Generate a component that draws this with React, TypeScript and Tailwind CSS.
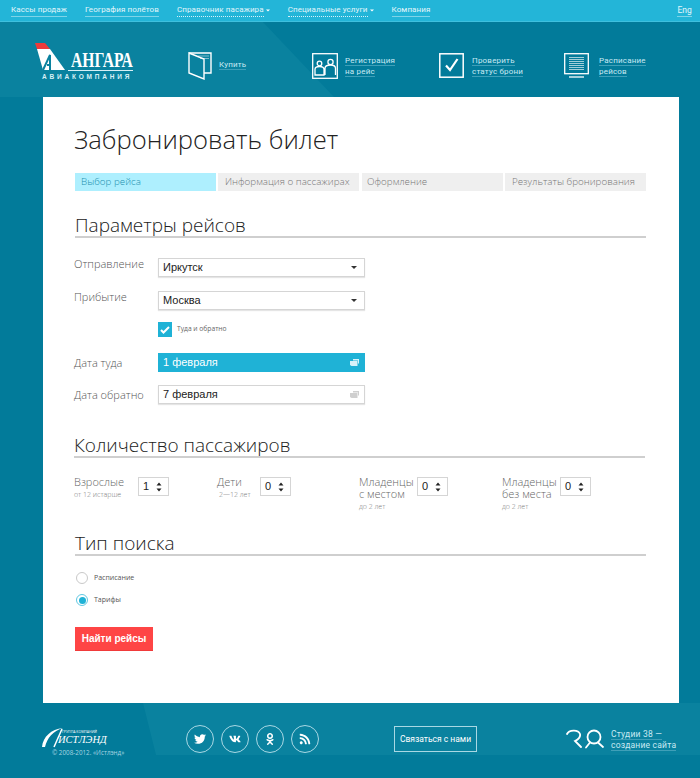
import { FaTwitter, FaVk, FaOdnoklassniki, FaRss } from "react-icons/fa";

const navItems = [
  { label: "Кассы продаж" },
  { label: "География полётов" },
  { label: "Справочник пасажира", drop: true },
  { label: "Специальные услуги", drop: true },
  { label: "Компания" },
];

const steps = [
  { label: "Выбор рейса", cls: "pl-[6px] bg-[#aeeffe] text-[#1d8fae]" },
  { label: "Информация о пассажирах", cls: "pl-[7px] bg-[#efefef] text-[#777]" },
  { label: "Оформление", cls: "ml-[1px] pl-[5px] bg-[#efefef] text-[#777]" },
  { label: "Результаты бронирования", cls: "pl-[7px] bg-[#efefef] text-[#777]" },
];

const BookIcon = () => (
  <svg width="24" height="28" viewBox="0 0 24 28" fill="none" stroke="white" strokeWidth="1.4">
    <path d="M1 1h22v20h-7" />
    <path d="M1 1l15 6v20L1 21z" />
    <path d="M10 4h11M12 6.500h9" strokeWidth="0.7" opacity="0.7" />
  </svg>
);

const PeopleIcon = () => (
  <svg width="26" height="26" viewBox="0 0 26 26" fill="none" stroke="white" strokeWidth="1.3">
    <rect x="0.7" y="0.7" width="24.6" height="24.6" />
    <circle cx="7.5" cy="10.5" r="2.3" />
    <circle cx="18.5" cy="9" r="2.6" />
    <path d="M3 22v-5.500c0-2 2-3 4.500-3s4.500 1 4.500 3V22zM13 22v-6.500c0-2.500 2.500-3.500 5.500-3.500s5 1 5 3.500V22" />
  </svg>
);

const CheckIcon = () => (
  <svg width="25" height="25" viewBox="0 0 25 25" fill="none" stroke="white">
    <rect x="0.8" y="0.8" width="23.4" height="23.4" strokeWidth="1.5" />
    <path d="M7 12.500l4 4.500 7.500-11" strokeWidth="2.200" />
  </svg>
);

const ScheduleIcon = () => (
  <svg width="25" height="25" viewBox="0 0 25 25" fill="none" stroke="white">
    <rect x="0.7" y="0.700" width="23.600" height="20" strokeWidth="1.300" />
    <path d="M5 4.500h15M5 6.500h15M5 8.500h15M5 10.500h15M5 12.500h15M5 14.500h15M5 16.500h15" strokeWidth="0.900" opacity="0.700" />
    <path d="M5 24h15" strokeWidth="1.300" />
  </svg>
);

const Caret = ({ className }: { className: string }) => (
  <svg width="6" height="3" viewBox="0 0 6 3" className={className}>
    <path d="M0 0h6L3 3z" fill="currentColor" />
  </svg>
);

const SpinArrows = () => (
  <svg width="6" height="10" viewBox="0 0 6 10" className="text-[#222]">
    <path d="M0.500 3.500L3 0.500 5.500 3.500zM0.500 6.500L3 9.500 5.500 6.500z" fill="currentColor" />
  </svg>
);

const CalendarIcon = ({ color }: { color: string }) => (
  <svg width="9" height="7" viewBox="0 0 9 7" fill={color}>
    <path d="M3 0h6v4.500H8V1.500H3zM0 2h7.500v5H1.500L0 6z" />
  </svg>
);

const SectionTitle = ({ children }: { children: string }) => (
  <div className="border-b-2 border-[#cfcfcf] w-[571px] h-[25px]">
    <h2 className="text-[19px] leading-[24px] font-light text-[#222] -mt-[4px]">{children}</h2>
  </div>
);

const Select = ({ value }: { value: string }) => (
  <div className="w-[207px] h-[19px] border border-[#d5d5d5] bg-white flex items-center justify-between pl-[4px] pr-[7px] shadow-[0_1px_1px_rgba(0,0,0,0.1)]">
    <span className="text-[11px] font-['Liberation_Sans',sans-serif] text-[#222]">{value}</span>
    <Caret className="text-[#333]" />
  </div>
);

const FormRow = ({ label, children, className, labelClass }: { label: string; children: React.ReactNode; className: string; labelClass: string }) => (
  <div className={`flex ${className}`}>
    <div className={`w-[84px] text-[11px] leading-[14px] text-[#555] font-light ${labelClass}`}>{label}</div>
    {children}
  </div>
);

const Stepper = ({ value }: { value: string }) => (
  <div className="h-[19px] w-[31px] border border-[#d5d5d5] flex items-center justify-between pl-[4px] pr-[6px]">
    <span className="text-[11px] font-['Liberation_Sans',sans-serif] text-[#222]">{value}</span>
    <SpinArrows />
  </div>
);

const Passenger = ({ label, sub, value, width, labelW, subPad }: { label: string; sub: string; value: string; width: string; labelW: string; subPad?: string }) => (
  <div className={`${width} flex items-start`}>
    <div className={`${labelW} font-light -mt-[1.5px]`}>
      <div className="text-[11px] leading-[12px] text-[#666]">{label}</div>
      <div className={`text-[7px] leading-[10px] mt-[2px] text-[#777] ${subPad ?? ""}`}>{sub}</div>
    </div>
    <Stepper value={value} />
  </div>
);

const HeaderLink = ({ lines, size }: { lines: string[]; size: string }) => (
  <div className={`${size} leading-[11px] text-[#c9eaf3] font-['Roboto',sans-serif] tracking-[0.2px]`}>
    {lines.map((l) => (
      <div key={l}><span className="border-b border-[#3f9fb8]">{l}</span></div>
    ))}
  </div>
);

const Social = ({ children }: { children: React.ReactNode }) => (
  <div className="w-[28px] h-[28px] rounded-full border border-[#a9d8e4] flex items-center justify-center text-white text-[12px]">
    {children}
  </div>
);

export default function App() {
  return (
    <div className="relative w-[700px] h-[778px] overflow-hidden bg-[#027b9a] font-['Open_Sans',sans-serif]">
      {/* background facets */}
      <svg className="absolute inset-0 pointer-events-none" width="700" height="778" viewBox="0 0 700 778">
        <path d="M0 21h262l72 76H0z" fill="#0a829f" />
        <path d="M143 703h557v52H156z" fill="#0a829f" />
      </svg>

      <div className="relative flex flex-col h-full">
        {/* top nav */}
        <div className="h-[22px] bg-[#23b5d8] border-b border-[#3fc0de] flex items-center gap-[18px] pl-[11px] pr-[8px] text-[8px] text-[#e2f6fb] font-['Roboto',sans-serif] tracking-[0.1px]">
          {navItems.map((n) => (
            <div key={n.label} className="flex items-center whitespace-nowrap">
              <span className={n.drop ? "border-b border-dotted border-[#d5f2fa]" : "border-b border-[#7ed4e8]"}>{n.label}</span>
              {n.drop && <Caret className="ml-[2px] w-[4px] text-white" />}
            </div>
          ))}
          <span className="ml-auto text-[8.500px] border-b border-[#7ed4e8]">Eng</span>
        </div>

        {/* header */}
        <div className="h-[75px] flex items-start">
          <div className="relative w-[98px] h-[40px] ml-[35px] mt-[20px]">
            <svg className="absolute left-0 top-0" width="32" height="30" viewBox="0 0 32 30">
              <path d="M0 1h10l5 6H2z" fill="#ee3b3b" />
              <path d="M2 7h13l15 21H8z" fill="white" />
              <path d="M8 28l7-15v15M12 23h3" fill="none" stroke="#0a829f" strokeWidth="2" />
            </svg>
            <span className="absolute left-[36px] top-[6.500px] text-[20px] leading-[22px] font-bold text-white font-['Liberation_Serif',serif] whitespace-nowrap origin-left scale-x-[0.78]">АНГАРА</span>
            <div className="absolute left-[33px] right-0 top-[28px] h-px bg-[#d8f0f6]" />
            <span className="absolute left-[7px] top-[30px] text-[6.500px] leading-[9px] font-bold text-[#d8f0f6] tracking-[2.800px] font-['Liberation_Sans',sans-serif] whitespace-nowrap">АВИАКОМПАНИЯ</span>
          </div>

          <div className="flex items-center mt-[30px] ml-[55px] w-[124px] gap-[7px]">
            <BookIcon />
            <div className="-mt-[4px]">
              <HeaderLink lines={["Купить"]} size="text-[8px]" />
            </div>
          </div>
          <div className="flex items-center mt-[31px] w-[127px] gap-[7px]">
            <PeopleIcon />
            <HeaderLink lines={["Регистрация", "на рейс"]} size="text-[8px]" />
          </div>
          <div className="flex items-center mt-[31px] w-[125px] gap-[8px]">
            <CheckIcon />
            <HeaderLink lines={["Проверить", "статус брони"]} size="text-[8px]" />
          </div>
          <div className="flex items-center mt-[31px] gap-[10px]">
            <ScheduleIcon />
            <HeaderLink lines={["Расписание", "рейсов"]} size="text-[8px]" />
          </div>
        </div>

        {/* card */}
        <div className="w-[636px] h-[606px] ml-[43px] bg-white pl-[31px] flex flex-col items-start">
          <h1 className="mt-[27px] text-[25.600px] leading-[32px] font-light text-[#222] whitespace-nowrap">Забронировать билет</h1>

          <div className="mt-[17px] flex ml-[1px] w-[571px] gap-[2px]">
            {steps.map((s) => (
              <div key={s.label} className={`w-[141px] shrink-0 h-[18px] flex items-center text-[9.800px] whitespace-nowrap font-light ${s.cls}`}>
                {s.label}
              </div>
            ))}
          </div>

          <div className="mt-[26px] ml-[1px]">
            <SectionTitle>Параметры рейсов</SectionTitle>
          </div>

          <FormRow label="Отправление" className="mt-[20px]" labelClass="-mt-[1px]">
            <Select value="Иркутск" />
          </FormRow>
          <FormRow label="Прибытие" className="mt-[14px]" labelClass="-mt-[1px]">
            <Select value="Москва" />
          </FormRow>
          <div className="mt-[12px] ml-[84px] flex items-center gap-[5px]">
            <div className="w-[14px] h-[15px] bg-[#1fb2d6] flex items-center justify-center">
              <svg width="10" height="8" viewBox="0 0 10 8" fill="none" stroke="white" strokeWidth="2">
                <path d="M1 4l2.500 2.500L9 1" />
              </svg>
            </div>
            <span className="text-[6.700px] text-[#666]">Туда и обратно</span>
          </div>
          <FormRow label="Дата туда" className="mt-[16px]" labelClass="mt-[3px]">
            <div className="w-[207px] h-[19px] bg-[#1fb2d6] flex items-center justify-between pl-[5px] pr-[6px]">
              <span className="text-[11px] text-white font-['Liberation_Sans',sans-serif]">1 февраля</span>
              <CalendarIcon color="#d8f2f9" />
            </div>
          </FormRow>
          <FormRow label="Дата обратно" className="mt-[13px]" labelClass="mt-[3px]">
            <div className="w-[207px] h-[19px] border border-[#d5d5d5] flex items-center justify-between pl-[4px] pr-[5px] shadow-[0_1px_1px_rgba(0,0,0,0.1)]">
              <span className="text-[11px] font-['Liberation_Sans',sans-serif] text-[#222]">7 февраля</span>
              <CalendarIcon color="#cfcfcf" />
            </div>
          </FormRow>

          <div className="mt-[33px]">
            <SectionTitle>Количество пассажиров</SectionTitle>
          </div>

          <div className="mt-[19px] flex h-[53px]">
            <Passenger label="Взрослые" sub="от 12 истарше" value="1" width="w-[143px]" labelW="w-[64px]" />
            <Passenger label="Дети" sub="2—12 лет" value="0" width="w-[142px]" labelW="w-[43px]" subPad="pl-[2px]" />
            <Passenger label="Младенцы с местом" sub="до 2 лет" value="0" width="w-[143px]" labelW="w-[58px]" />
            <Passenger label="Младенцы без места" sub="до 2 лет" value="0" width="w-[143px]" labelW="w-[58px]" />
          </div>

          <div className="mt-[5px] ml-[1px]">
            <SectionTitle>Тип поиска</SectionTitle>
          </div>

          <div className="mt-[16px] ml-[2px] flex items-center gap-[6px] h-[12px]">
            <div className="w-[12px] h-[12px] rounded-full border border-[#c9c9c9]" />
            <span className="text-[7px] text-[#555]">Расписание</span>
          </div>
          <div className="mt-[10px] ml-[2px] flex items-center gap-[6px] h-[12px]">
            <div className="w-[12px] h-[12px] rounded-full border border-[#5fc8e2] flex items-center justify-center">
              <div className="w-[7px] h-[7px] rounded-full bg-[#1fb2d6]" />
            </div>
            <span className="text-[7px] text-[#555]">Тарифы</span>
          </div>

          <button className="mt-[21px] ml-[1px] w-[78px] h-[24px] bg-[#fe4545] border-b border-[#f03a3a] text-white text-[10px] font-bold font-['Liberation_Sans',sans-serif]">
            Найти рейсы
          </button>
        </div>

        {/* footer */}
        <div className="flex-1 flex items-start">
          <div className="relative w-[143px] h-full">
            <svg className="absolute left-[41px] top-[24px]" width="24" height="22" viewBox="0 0 24 22" fill="none" stroke="white">
              <path d="M1 20C2 10 10 2 22 1 12 4 6 11 4 20z" fill="white" stroke="none" />
              <path d="M21 2L13 20" strokeWidth="1.500" />
            </svg>
            <span className="absolute left-[62px] top-[26px] text-[3.500px] leading-[5px] text-white whitespace-nowrap">ГРУППА КОМПАНИЙ</span>
            <span className="absolute left-[58px] top-[31px] text-[10.500px] leading-[12px] italic text-white font-['Liberation_Serif',serif] whitespace-nowrap">ИСТЛЭНД</span>
            <span className="absolute left-[52px] top-[45px] text-[6.300px] leading-[9px] text-[#a8d6e2] whitespace-nowrap">© 2008-2012. «Истлэнд»</span>
          </div>
          <div className="flex items-center gap-[7px] mt-[22px] ml-[43px]">
            <Social><FaTwitter /></Social>
            <Social><FaVk /></Social>
            <Social><FaOdnoklassniki /></Social>
            <Social><FaRss /></Social>
          </div>
          <div className="mt-[23px] ml-[75px] w-[83px] h-[26px] border border-[#a9d8e4] flex items-center justify-center text-[8.500px] text-white font-['Roboto',sans-serif] whitespace-nowrap">
            Связаться с нами
          </div>
          <svg className="ml-[89px] mt-[26px]" width="39" height="20" viewBox="0 0 39 20" fill="none" stroke="white" strokeWidth="1.800" strokeLinecap="round">
            <path d="M1 5C3 1 12 0 14 5c1 4-3 6-5 7l6 6" />
            <circle cx="28" cy="8" r="6.500" />
            <path d="M24 13.500l-4 5M32 13.500l5 4.500" />
          </svg>
          <div className="ml-[6px] mt-[26px]">
            <HeaderLink lines={["Студии 38 —", "создание сайта"]} size="text-[8.500px]" />
          </div>
        </div>
      </div>
    </div>
  );
}
